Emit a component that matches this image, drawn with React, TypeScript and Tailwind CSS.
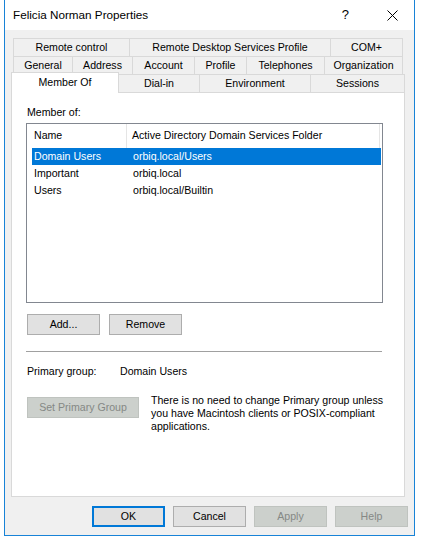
const FONT = { fontFamily: '"Liberation Sans", Arial, sans-serif' };

function Tab({ w, label, last }: { w: string; label: string; last?: boolean }) {
  return (
    <div className={`${w} h-[18px] flex items-center justify-center border-t border-l border-[#d9d9d9] ${last ? 'border-r' : ''}`}>
      {label}
    </div>
  );
}

function Btn({ label, w = 'w-[73px]', disabled, primary }: { label: string; w?: string; disabled?: boolean; primary?: boolean }) {
  const tone = disabled
    ? 'bg-[#ccd0cc] border border-[#bfc3bf] text-[#858885]'
    : primary
      ? 'bg-[#e1e1e1] border-2 border-[#0078d7] text-black'
      : 'bg-[#e1e1e1] border border-[#adadad] text-black';
  return (
    <div className={`${w} h-[21px] flex items-center justify-center ${tone}`}>{label}</div>
  );
}

const groups = [
  { name: 'Domain Users', folder: 'orbiq.local/Users', selected: true },
  { name: 'Important', folder: 'orbiq.local' },
  { name: 'Users', folder: 'orbiq.local/Builtin' },
];

export default function App() {
  return (
    <div className="w-[422px] h-[551px] bg-white pl-[4px] text-[10.6px] text-black" style={FONT}>
      <div className="w-[411px] h-[536px] border border-t-0 border-[#1883d7] bg-[#f0f0f0] flex flex-col">
        {/* title bar */}
        <div className="h-[30px] bg-white flex items-center pl-[8px] pr-[16px] text-[11.7px]">
          <span>Felicia Norman Properties</span>
          <span className="ml-auto mr-[38px] text-[13px]">?</span>
          <svg width="11" height="11" viewBox="0 0 11 11" className="mt-[1px]">
            <path d="M0.5 0.5 L10.5 10.5 M10.5 0.5 L0.5 10.5" stroke="#000" strokeWidth="1" />
          </svg>
        </div>

        {/* tabs */}
        <div className="pt-[8px]">
          <div className="flex h-[18px] pl-[8px]">
            <Tab w="w-[116px]" label="Remote control" />
            <Tab w="w-[201px]" label="Remote Desktop Services Profile" />
            <Tab w="w-[73px]" label="COM+" last />
          </div>
          <div className="flex h-[18px] pl-[8px]">
            <Tab w="w-[59px]" label="General" />
            <Tab w="w-[60px]" label="Address" />
            <Tab w="w-[62px]" label="Account" />
            <Tab w="w-[52px]" label="Profile" />
            <Tab w="w-[78px]" label="Telephones" />
            <Tab w="w-[79px]" label="Organization" last />
          </div>
          <div className="flex items-end h-[20px] -mt-[2px] pl-[6px]">
            <div className="relative z-10 w-[108px] h-[21px] -mb-px bg-white border border-b-0 border-[#d9d9d9] flex justify-center pt-[2px]">
              Member Of
            </div>
            <div className="w-[81px] h-[18px] border-t border-r border-[#d9d9d9] flex items-center justify-center">Dial-in</div>
            <div className="w-[111px] h-[18px] border-t border-r border-[#d9d9d9] flex items-center justify-center">Environment</div>
            <div className="w-[94px] h-[18px] border-t border-r border-[#d9d9d9] flex items-center justify-center">Sessions</div>
          </div>
        </div>

        {/* panel */}
        <div className="ml-[6px] w-[394px] h-[405px] bg-white border border-[#d9d9d9] pl-[14px] pt-[13px]">
          <div className="leading-[13px] pl-px">Member of:</div>

          <div className="mt-[4px] w-[357px] h-[180px] border border-[#828790] bg-white">
            <div className="flex h-[24px] items-center">
              <div className="w-[100px] h-full flex items-center pl-[7px] border-r border-[#e5e5e5]">Name</div>
              <div className="w-[253px] h-full flex items-center pl-[5px] border-r border-[#e5e5e5]">
                Active Directory Domain Services Folder
              </div>
            </div>
            <div className="pl-[5px]">
              {groups.map(g => (
                <div
                  key={g.name}
                  className={`flex w-[349px] h-[17px] items-center ${g.selected ? 'bg-[#0078d7] text-white' : ''}`}
                >
                  <div className="w-[99px] pl-[2px]">{g.name}</div>
                  <div className="pl-[2px]">{g.folder}</div>
                </div>
              ))}
            </div>
          </div>

          <div className="flex gap-[9px] mt-[11px] pl-px">
            <Btn label="Add..." />
            <Btn label="Remove" />
          </div>

          <div className="mt-[16px] w-[356px] h-px bg-[#a0a0a0]" />

          <div className="flex mt-[13px] leading-[13px] pl-px">
            <div className="w-[93px]">Primary group:</div>
            <div>Domain Users</div>
          </div>

          <div className="flex items-start mt-[16px] pl-px">
            <div className="mt-[3px]">
              <Btn label="Set Primary Group" w="w-[112px]" disabled />
            </div>
            <div className="ml-[12px] leading-[13px]">
              There is no need to change Primary group unless<br />
              you have Macintosh clients or POSIX-compliant<br />
              applications.
            </div>
          </div>
        </div>

        {/* footer buttons */}
        <div className="flex justify-end gap-[8px] mt-[9px] pr-[6px]">
          <Btn label="OK" primary />
          <Btn label="Cancel" />
          <Btn label="Apply" disabled />
          <Btn label="Help" disabled />
        </div>
      </div>
    </div>
  );
}
